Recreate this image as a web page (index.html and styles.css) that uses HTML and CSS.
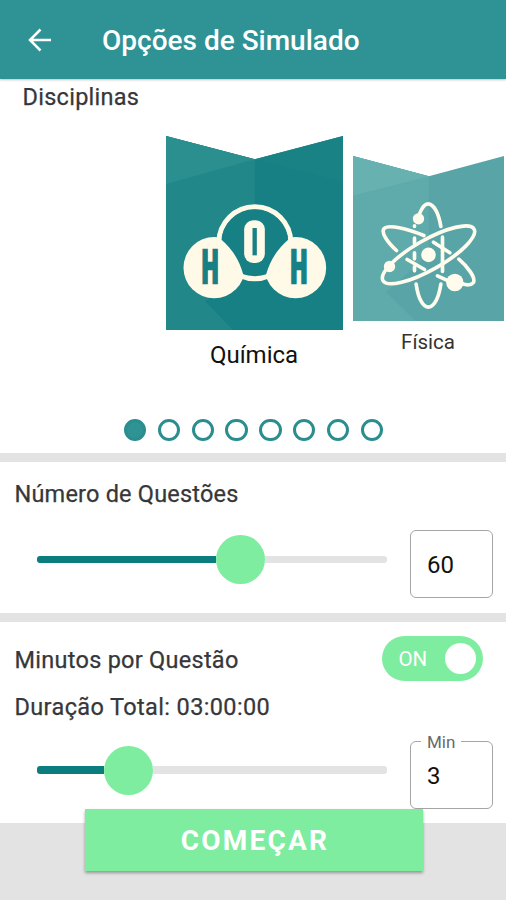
FILE: index.html
```html
<!DOCTYPE html>
<html lang="pt-BR">
<head>
<meta charset="utf-8">
<title>Opções de Simulado</title>
<link rel="stylesheet" href="styles.css">
</head>
<body>
<header class="bar">
  <svg class="back" viewBox="0 0 24 24"><path d="M23 12H2M12.500 1.500 2 12l10.500 10.500" fill="none" stroke="#fff" stroke-width="2.500"/></svg>
  <h1 class="title">Opções de Simulado</h1>
</header>
<main>
  <section class="subjects">
    <h2 class="label">Disciplinas</h2>
    <div class="carousel">
      <figure class="subject active">
        <svg class="art" viewBox="31.5 33 531 582" preserveAspectRatio="none">
          <path d="M31.500 33 298 103 562.500 33V615H31.500Z" fill="#178084"/>
          <path d="M31.500 33 298 103V350L150 530 232 615H31.500Z" fill="#228789"/>
          <path d="M31.500 33 298 103 31.500 177Z" fill="#2b8f8f"/>
          <path d="M298 103 562.500 33V170Z" fill="#198285"/>
          <circle cx="298" cy="353" r="108" fill="#178084" stroke="#fff9e8" stroke-width="15"/>
          <circle cx="176" cy="428" r="92" fill="#fff9e8"/>
          <circle cx="420" cy="428" r="92" fill="#fff9e8"/>
          <path d="M198 344Q246 385 263 448H332Q350 385 398 344A100.500 100.500 0 0 0 198 344Z" fill="#178084"/>
          <rect x="266" y="286" width="62" height="128" rx="27" fill="#fff9e8"/>
          <path d="M297.500 309V391" stroke="#178084" stroke-width="13"/>
          <text class="atom" transform="translate(164 473) scale(.52 1)">H</text>
          <text class="atom" transform="translate(430 473) scale(.52 1)">H</text>
        </svg>
        <figcaption>Química</figcaption>
      </figure>
      <figure class="subject next">
        <svg class="art" viewBox="22.5 31.5 453 495" preserveAspectRatio="none">
          <path d="M22.500 31.500 250 92 475.500 31.500V526.500H22.500Z" fill="#58a4a6"/>
          <path d="M22.500 31.500 250 92V328L122 440 210 526.500H22.500Z" fill="#5faaaa"/>
          <path d="M22.500 31.500 250 92 22.500 150Z" fill="#68b1b1"/>
          <g fill="none" stroke="#fffbed" stroke-width="11" stroke-linecap="round">
            <ellipse cx="249" cy="328" rx="157" ry="45" transform="rotate(-29.5 249 328)"/>
            <path d="M222 205C232 180 242 174 249 175C266 177 280 205 286 243M212 416C225 508 272 508 286 416M291 275V378M207 241V243M207 278V294M207 322V340M207 364V376"/>
            <path d="M153 315C125 290 107 262 115 250C128 235 185 250 235 270M264 290 313 322M185 342 237 372M340 341C365 362 393 398 383 412C376 420 360 418 350 415M276 391 310 407"/>
          </g>
          <g fill="#fffbed"><circle cx="249" cy="328" r="22"/><circle cx="219" cy="220" r="17"/><circle cx="132" cy="363" r="17"/><circle cx="328" cy="411" r="26"/></g>
        </svg>
        <figcaption>Física</figcaption>
      </figure>
    </div>
    <div class="dots"><i class="on"></i><i></i><i></i><i></i><i></i><i></i><i></i><i></i></div>
  </section>
  <section class="count">
    <h2 class="label">Número de Questões</h2>
    <div class="row">
      <div class="slider"><span class="fill fill-count"></span><span class="thumb"></span><span class="rest"></span></div>
      <div class="field">60</div>
    </div>
  </section>
  <section class="minutes">
    <div class="head">
      <h2 class="label">Minutos por Questão</h2>
      <div class="toggle"><span>ON</span><i></i></div>
    </div>
    <p class="label total">Duração Total: 03:00:00</p>
    <div class="row">
      <div class="slider"><span class="fill fill-min"></span><span class="thumb"></span><span class="rest"></span></div>
      <div class="field min"><span class="legend">Min</span>3</div>
    </div>
  </section>
</main>
<button class="start">COMEÇAR</button>
</body>
</html>
```
FILE: styles.css
```css
* { box-sizing: border-box; }
body { margin: 0; height: 900px; overflow: hidden; background: #e3e3e3; font-family: Roboto, sans-serif; color: #36373a; }
h1, h2, p, figure { margin: 0; }
.bar { height: 79px; background: #2f9295; display: flex; align-items: center; padding: 3px 0 0 28px; box-shadow: 0 1px 2px rgba(0,0,0,.25); position: relative; }
.back { width: 24px; height: 24px; margin-top: -2px; }
.title { margin-left: 50px; color: #fff; font-size: 28px; font-weight: 500; line-height: 36px; white-space: nowrap; }
main { display: flex; flex-direction: column; gap: 9px; }
section { background: #fff; }
.label { font-size: 23.500px; font-weight: 400; line-height: 30px; letter-spacing: .27px; white-space: nowrap; -webkit-text-stroke: .25px currentColor; }
.subjects { height: 374px; padding-top: 3px; overflow: hidden; }
.subjects .label { padding-left: 22.500px; }
.carousel { display: flex; gap: 10px; padding: 24px 0 0 165.500px; height: 305px; }
.subject { flex: none; display: flex; flex-direction: column; align-items: center; color: #111; }
.art { display: block; width: 100%; }
.active { width: 177px; }
.active .art { height: 194px; }
.active figcaption { font-size: 24px; line-height: 30px; margin-top: 10px; }
.next { width: 151px; padding-top: 19.500px; color: #333; }
.next .art { height: 165px; }
.next figcaption { font-size: 20.500px; line-height: 26px; margin-top: 8px; }
.atom { font: 900 137px Roboto, sans-serif; text-anchor: middle; fill: #178084; stroke: #178084; stroke-width: 7px; }
.dots { display: flex; justify-content: center; gap: 11.300px; padding: 1.500px 0 0 1px; }
.dots i { width: 22.500px; height: 22.500px; border: 3px solid #2a8d8e; border-radius: 50%; }
.dots .on { background: #2f9295; }
.count { height: 151px; padding: 17px 13.500px 0 14.500px; }
.count .label { letter-spacing: .2px; }
.row { display: flex; align-items: center; justify-content: space-between; padding-left: 22.500px; }
.count .row { margin-top: 21px; }
.slider { display: flex; align-items: center; width: 350px; margin-bottom: 9px; }
.fill { height: 7.500px; background: #0c7d7e; border-radius: 3px 0 0 3px; }
.fill-count { width: 179px; }
.fill-min { width: 67px; }
.thumb { width: 49px; height: 49px; border-radius: 50%; background: #7eed9f; }
.rest { flex: 1; height: 7.500px; background: #e3e3e3; border-radius: 0 3px 3px 0; }
.field { width: 82.500px; height: 68px; border: 1.500px solid #a5a5a5; border-radius: 6px; padding: 1px 0 0 16px; font-size: 24px; line-height: 66px; color: #111; position: relative; }
.minutes { height: 201px; padding: 14px 13.500px 0 14.500px; }
.head { display: flex; justify-content: space-between; height: 46px; align-items: center; }
.head .label { padding-top: 1px; }
.toggle { width: 101.500px; height: 45px; margin: -1px 9.500px 0 0; border-radius: 23px; background: #7eed9f; color: #fff; display: flex; align-items: center; justify-content: space-between; padding: 0 7px 0 17px; font-size: 20.500px; }
.toggle i { width: 31px; height: 31px; border-radius: 50%; background: #fff; }
.total { margin-top: 10px; letter-spacing: .37px; }
.minutes .row { margin-top: 18.500px; }
.legend { position: absolute; left: 10px; top: -11px; padding: 0 6px; background: #fff; color: #68696b; font-size: 17px; line-height: 22px; }
.start { display: block; position: relative; width: 338px; height: 62px; margin: -14px 0 0 84.500px; padding: 2px 0 0 3px; border: 0; background: #7eed9f; color: #fff; font: 700 28px/60px Roboto, sans-serif; letter-spacing: 2.200px; box-shadow: 0 2px 3px rgba(0,0,0,.35); }
```
